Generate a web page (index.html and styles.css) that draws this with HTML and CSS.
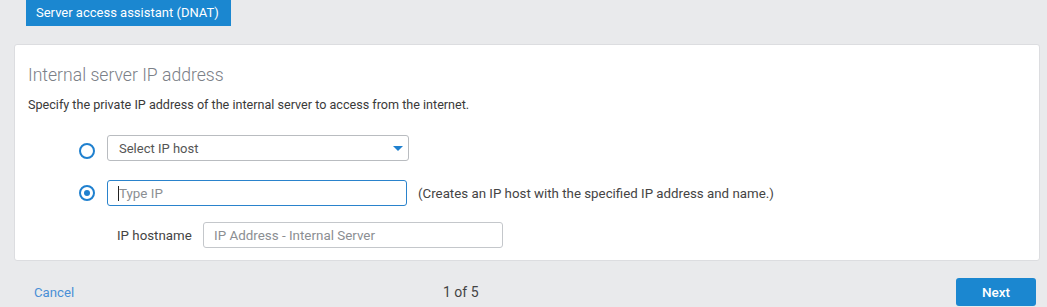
FILE: index.html
```html
<!DOCTYPE html>
<html>
<head>
<meta charset="utf-8">
<link rel="stylesheet" href="styles.css">
</head>
<body>
<div class="tab">Server access assistant (DNAT)</div>
<div class="card">
  <h2 class="title">Internal server IP address</h2>
  <p class="desc">Specify the private IP address of the internal server to access from the internet.</p>
  <div class="row row-select">
    <span class="radio"></span>
    <div class="select">
      <span class="select-text">Select IP host</span>
      <span class="caret"></span>
    </div>
  </div>
  <div class="row row-type">
    <span class="radio checked"></span>
    <div class="input focus"><span class="cursor"></span><span class="ph">Type IP</span></div>
    <span class="hint">(Creates an IP host with the specified IP address and name.)</span>
  </div>
  <div class="row row-host">
    <span class="label">IP hostname</span>
    <div class="input"><span class="ph">IP Address - Internal Server</span></div>
  </div>
</div>
<div class="footer">
  <a class="cancel">Cancel</a>
  <span class="step">1 of 5</span>
  <button class="next">Next</button>
</div>
</body>
</html>
```
FILE: styles.css
```css
* { box-sizing: border-box; }
html, body { margin: 0; padding: 0; }
body {
  background: #e9eaec;
  font-family: Roboto, "Liberation Sans", sans-serif;
  color: #333;
  width: 1047px;
  height: 307px;
  overflow: hidden;
}
.tab {
  margin-left: 26px;
  width: 205px;
  height: 26px;
  background: #1b87d0;
  color: #fff;
  font-size: 13px;
  line-height: 26px;
  padding-left: 10px;
}
.card {
  margin: 18px 7px 0 14px;
  height: 217px;
  background: #fff;
  border: 1px solid #dcdde0;
  border-radius: 3px;
  padding: 18px 13px 0 13px;
}
.title {
  margin: 0;
  font-size: 17.6px;
  font-weight: 300;
  line-height: 24px;
  color: #7b8087;
}
.desc {
  margin: 9px 0 0 0;
  font-size: 12.6px;
  line-height: 18px;
  color: #3a3a3a;
}
.row {
  display: flex;
  align-items: center;
  height: 26px;
}
.row-select { margin-top: 21px; padding-left: 51px; }
.row-type { margin-top: 19px; padding-left: 51px; }
.row-host { margin-top: 16px; padding-left: 89px; }
.radio {
  width: 16px;
  height: 16px;
  border: 2px solid #1f80cf;
  border-radius: 50%;
  margin-right: 12px;
  flex: none;
  display: flex;
  align-items: center;
  justify-content: center;
}
.row-select .radio { margin-top: 6px; }
.radio.checked::after {
  content: "";
  width: 6px;
  height: 6px;
  border-radius: 50%;
  background: #1f80cf;
}
.select {
  width: 302px;
  height: 26px;
  border: 1px solid #b9bcc0;
  border-radius: 3px;
  display: flex;
  align-items: center;
  justify-content: space-between;
  padding: 0 5px 0 11px;
}
.select-text { font-size: 13px; color: #555; }
.caret {
  width: 0; height: 0;
  border-left: 5px solid transparent;
  border-right: 5px solid transparent;
  border-top: 5px solid #1f80cf;
}
.input {
  width: 300px;
  height: 26px;
  border: 1px solid #c4c7cb;
  border-radius: 3px;
  display: flex;
  align-items: center;
  padding-left: 10px;
  font-size: 13.4px;
}
.input.focus { border-color: #2a83cc; }
.cursor {
  width: 1px;
  height: 15px;
  background: #222;
}
.ph { color: #8b8e92; }
.hint {
  margin-left: 11px;
  font-size: 13.3px;
  color: #444;
}
.label {
  font-size: 13.3px;
  color: #444;
  margin-right: 10px;
  width: 76px;
  white-space: nowrap;
}
.footer {
  display: flex;
  align-items: center;
  margin-top: 17px;
  height: 28px;
  padding-left: 34px;
}
.cancel {
  color: #4a8fd6;
  font-size: 13.2px;
  width: 409px;
}
.step {
  font-size: 14px;
  color: #444;
}
.next {
  margin-left: auto;
  margin-right: 11px;
  width: 80px;
  height: 28px;
  border: 0;
  border-radius: 3px;
  background: #1b87d0;
  color: #fff;
  font-family: inherit;
  font-size: 13.5px;
  font-weight: 500;
}
```
